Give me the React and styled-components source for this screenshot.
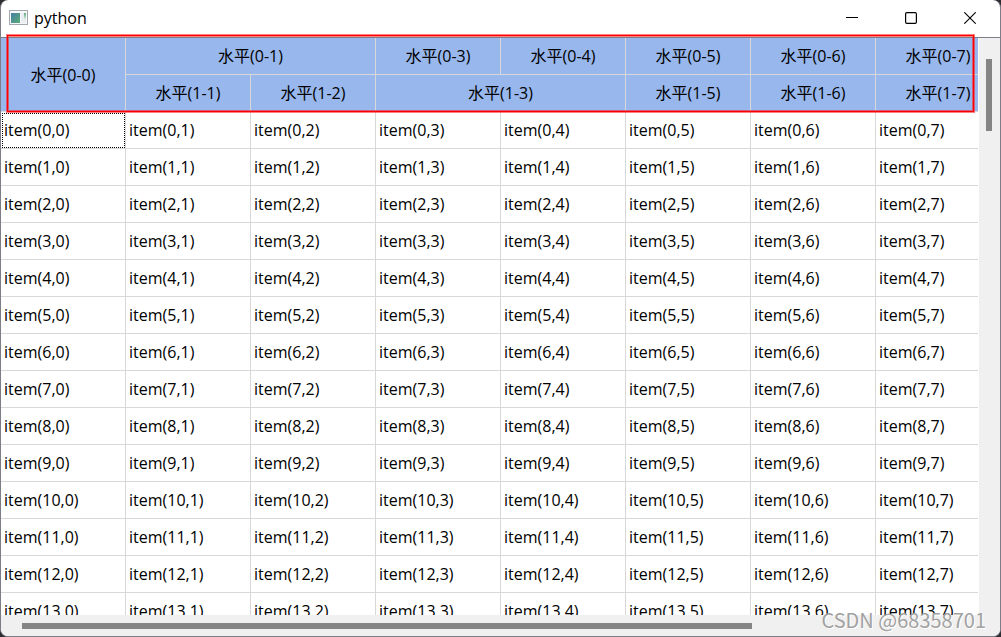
import styled, { createGlobalStyle } from "styled-components";

const GlobalStyle = createGlobalStyle`
  * {
    box-sizing: border-box;
  }

  body {
    margin: 0;
    background: #2b2d30;
    color: #000;
    font-family: "Open Sans", "Noto Sans CJK SC", sans-serif;
    font-size: 16px;
    overflow: hidden;
  }
`;

const Window = styled.div`
  position: relative;
  display: flex;
  flex-direction: column;
  height: 100vh;
  border: 1px solid #7c7d87;
  border-top: 0;
  border-radius: 8px;
  background: #fff;
  overflow: hidden;
`;

const TitleBar = styled.header`
  display: flex;
  align-items: center;
  height: 37px;
  flex: none;
  padding: 0 1px 1px 8px;

  h1 {
    flex: 1;
    margin: 0 0 0 6px;
    font-size: 16px;
    font-weight: 400;
    line-height: 22px;
  }
`;

const TitleButton = styled.button`
  display: flex;
  align-items: center;
  justify-content: center;
  width: 59px;
  height: 36px;
  padding: 0;
  border: 0;
  background: transparent;

  &:hover {
    background: #e9e9e9;
  }
`;

const Frame = styled.main`
  display: grid;
  grid-template-columns: minmax(0, 1fr) 21px;
  grid-template-rows: minmax(0, 1fr) 21px;
  flex: 1;
  min-height: 0;
  border-top: 1px solid #7c7d87;
  background: #f0f0f0;
`;

const Viewport = styled.div`
  overflow: hidden;
  border-right: 1px solid #fff;
  background: #fff;
`;

const Table = styled.table`
  width: 1000px;
  table-layout: fixed;
  border-collapse: separate;
  border-spacing: 0;
`;

const HeadCell = styled.th`
  height: 37px;
  padding: 0;
  border-right: 1px solid #d8d8d8;
  border-bottom: 1px solid #d8d8d8;
  background: #98b7ec;
  font-weight: 400;
  line-height: 22px;
  text-align: center;
`;

const Cell = styled.td`
  height: 37px;
  padding: 0 3px;
  border-right: 1px solid #d8d8d8;
  border-bottom: 1px solid #d8d8d8;
  line-height: 22px;
  white-space: nowrap;
  outline: ${({ $current }) => ($current ? "1px dotted #000" : "none")};
  outline-offset: -2px;
`;

const VerticalBar = styled.div`
  display: flex;
  justify-content: center;
  padding: 21px 1px 0 0;

  span {
    width: 6px;
    height: 72px;
    background: #858585;
  }
`;

const HorizontalBar = styled.div`
  display: flex;
  align-items: center;
  padding: 0 21px;

  span {
    width: 78%;
    height: 6px;
    background: #858585;
  }
`;

const Highlight = styled.div`
  position: absolute;
  top: 35px;
  left: 6px;
  right: 26px;
  height: 77px;
  border: 1px solid #f00;
  box-shadow: 0 0 0 1px rgba(255, 20, 20, 0.55), inset 0 0 0 1px rgba(255, 20, 20, 0.55);
  pointer-events: none;
`;

const Watermark = styled.div`
  position: absolute;
  right: 14px;
  bottom: 4px;
  color: #a2a2a2;
  font-family: "Noto Sans CJK SC", sans-serif;
  font-size: 20px;
  line-height: 24px;
  text-shadow: 1px 1px 0 #fff;
  pointer-events: none;
`;

const AppIcon = () => (
  <svg width="19" height="16" viewBox="0 0 19 16" aria-hidden="true">
    <defs>
      <linearGradient id="pane" x1="0" y1="0" x2="1" y2="1">
        <stop offset="0" stopColor="#477da5" />
        <stop offset="1" stopColor="#59ad75" />
      </linearGradient>
      <linearGradient id="side" x1="0" y1="0" x2="0" y2="1">
        <stop offset="0" stopColor="#5aa979" />
        <stop offset="1" stopColor="#eef2f4" />
      </linearGradient>
    </defs>
    <rect x="0.5" y="0.5" width="18" height="14" fill="#f6f7f8" stroke="#a2a8ad" />
    <rect x="2" y="3" width="9" height="10" fill="url(#pane)" />
    <rect x="12" y="3" width="5" height="10" fill="#e8edf1" />
    <rect x="15" y="3" width="2" height="7" fill="url(#side)" />
  </svg>
);

const headerRows = [
  [
    { text: "水平(0-0)", rowSpan: 2 },
    { text: "水平(0-1)", colSpan: 2 },
    { text: "水平(0-3)" },
    { text: "水平(0-4)" },
    { text: "水平(0-5)" },
    { text: "水平(0-6)" },
    { text: "水平(0-7)" },
  ],
  [
    { text: "水平(1-1)" },
    { text: "水平(1-2)" },
    { text: "水平(1-3)", colSpan: 2 },
    { text: "水平(1-5)" },
    { text: "水平(1-6)" },
    { text: "水平(1-7)" },
  ],
];

const columns = Array.from({ length: 8 }, (_, i) => i);
const rows = Array.from({ length: 14 }, (_, i) => i);

const App = () => {
  return (
    <>
      <GlobalStyle />
      <Window>
        <TitleBar>
          <AppIcon />
          <h1>python</h1>
          <TitleButton aria-label="Minimize">
            <svg width="12" height="12" viewBox="0 0 12 12">
              <path d="M0 5.5H12" stroke="#000" />
            </svg>
          </TitleButton>
          <TitleButton aria-label="Maximize">
            <svg width="12" height="12" viewBox="0 0 12 12">
              <rect x="0.6" y="0.6" width="10.8" height="10.8" rx="1.3" fill="none" stroke="#000" strokeWidth="1.2" />
            </svg>
          </TitleButton>
          <TitleButton aria-label="Close">
            <svg width="12" height="12" viewBox="0 0 12 12">
              <path d="M0.3 0.3L11.7 11.7M11.7 0.3L0.3 11.7" stroke="#000" strokeWidth="1.1" />
            </svg>
          </TitleButton>
        </TitleBar>

        <Frame>
          <Viewport>
            <Table>
              <colgroup>
                {columns.map((col) => (
                  <col key={col} />
                ))}
              </colgroup>
              <thead>
                {headerRows.map((cells, index) => (
                  <tr key={index}>
                    {cells.map(({ text, ...span }) => (
                      <HeadCell key={text} {...span}>{text}</HeadCell>
                    ))}
                  </tr>
                ))}
              </thead>
              <tbody>
                {rows.map((row) => (
                  <tr key={row}>
                    {columns.map((col) => (
                      <Cell key={col} $current={row === 0 && col === 0}>
                        {`item(${row},${col})`}
                      </Cell>
                    ))}
                  </tr>
                ))}
              </tbody>
            </Table>
          </Viewport>
          <VerticalBar>
            <span />
          </VerticalBar>
          <HorizontalBar>
            <span />
          </HorizontalBar>
        </Frame>

        <Highlight />
        <Watermark>CSDN @68358701</Watermark>
      </Window>
    </>
  );
};

export default App;
